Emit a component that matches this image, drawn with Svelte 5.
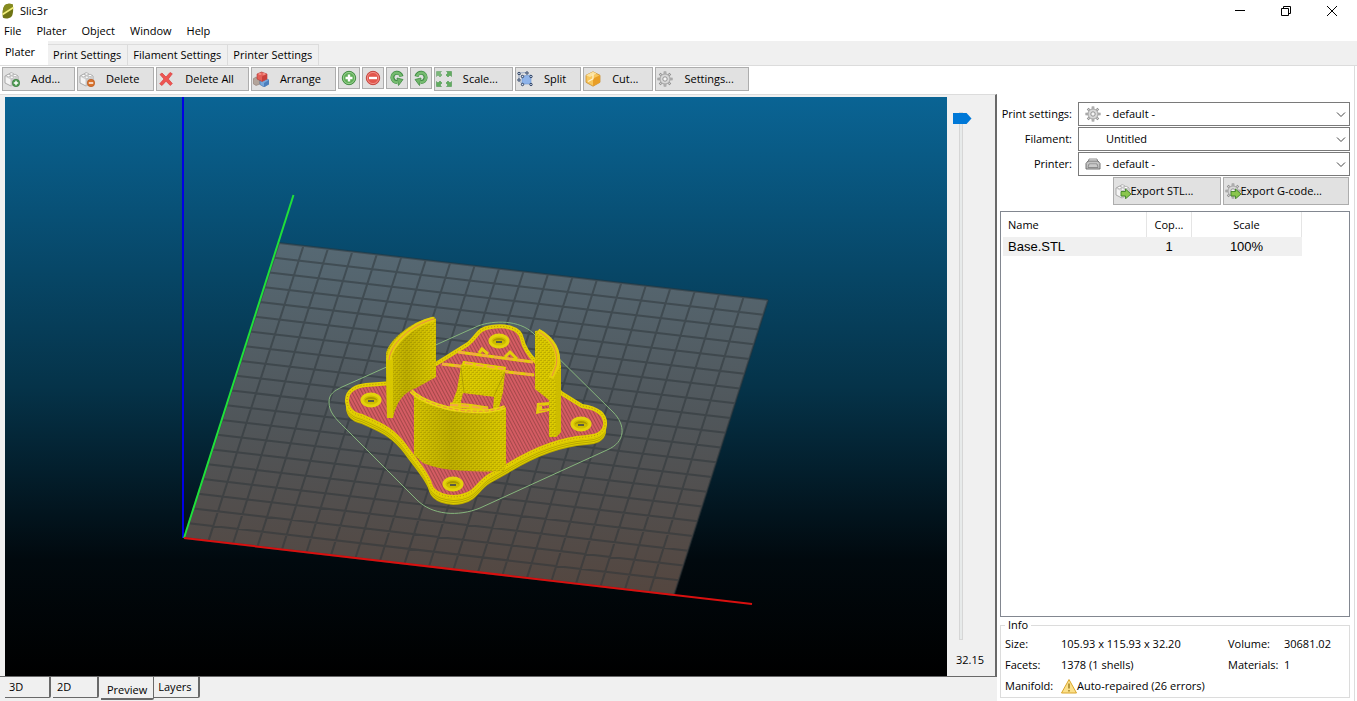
<script lang="ts">
  type Point = [number, number];

  const menus = ["File", "Plater", "Object", "Window", "Help"];
  const tabs = ["Plater", "Print Settings", "Filament Settings", "Printer Settings"];
  const views = ["3D", "2D", "Preview", "Layers"];
  const tools = [
    { icon: "add", label: "Add..." },
    { icon: "delete", label: "Delete" },
    { icon: "cross", label: "Delete All" },
    { icon: "arrange", label: "Arrange" },
    { icon: "more", title: "More copies" },
    { icon: "fewer", title: "Fewer copies" },
    { icon: "ccw", title: "Rotate left" },
    { icon: "cw", title: "Rotate right" },
    { icon: "scale", label: "Scale..." },
    { icon: "split", label: "Split" },
    { icon: "cut", label: "Cut..." },
    { icon: "gear", label: "Settings..." },
  ];
  const presets = [
    { id: "print", label: "Print settings:", icon: "gear", value: "- default -" },
    { id: "filament", label: "Filament:", icon: "", value: "Untitled" },
    { id: "printer", label: "Printer:", icon: "printer", value: "- default -" },
  ];
  const objects = [{ name: "Base.STL", copies: 1, scale: "100%" }];

  let tab = $state("Plater");
  let view = $state("Preview");
  let layer = $state(32.15);

  // print bed: corners on screen, origin first, then clockwise
  const bed: Point[] = [[184, 538], [279, 243], [768, 300], [674, 595]];
  const cells = 20;
  const lerp = (a: Point, b: Point, t: number): Point => [
    a[0] + (b[0] - a[0]) * t,
    a[1] + (b[1] - a[1]) * t,
  ];
  const line = (a: Point, b: Point) => `M${a.join(" ")}L${b.join(" ")}`;
  let grid = "";
  for (let i = 0; i <= cells; i++) {
    const t = i / cells;
    grid += line(lerp(bed[0], bed[3], t), lerp(bed[1], bed[2], t));
    grid += line(lerp(bed[0], bed[1], t), lerp(bed[3], bed[2], t));
  }

  const plate =
    "M347 400C347 390 357 386 366 385L392 383L436 364L468 344C477 337 478 328 491 327C504 325 520 327 522 339C524 348 529 355 536 362L561 393L582 406C596 408 606 413 605 425C604 434 596 436 586 437C560 439 533 450 510 464L489 476C478 483 476 493 462 496C447 499 433 494 430 484C428 474 414 459 405 446C392 428 379 424 362 416C352 414 347 409 347 400Z";
  const holes: Point[] = [[371, 400], [499, 341], [581, 424], [453, 484]];
</script>

{#snippet brick()}
  <path d="M1 5l6-3 7 3v6l-7 4-6-3z" fill="#f4f4f4" stroke="#999" stroke-width=".8" />
  <path d="M7 8l7-3v6l-7 4z" fill="#ccc" />
  <path d="M1 5l6 3v7" fill="none" stroke="#bbb" stroke-width=".7" />
  <g fill="#fff" stroke="#999" stroke-width=".6">
    <ellipse cx="4.5" cy="4.6" rx="1.8" ry="1.2" /><ellipse cx="7.5" cy="3" rx="1.8" ry="1.2" />
    <ellipse cx="7.8" cy="6.2" rx="1.8" ry="1.2" /><ellipse cx="11" cy="4.5" rx="1.8" ry="1.2" />
  </g>
{/snippet}

{#snippet cog()}
  <g stroke="#8b8b8b" stroke-width="2.6">
    <path d="M8 .5v15M.5 8h15M2.700 2.700l10.600 10.600M13.300 2.700L2.700 13.300" />
  </g>
  <g stroke="#d6d6d6" stroke-width="1.2">
    <path d="M8 1.200v13.600M1.200 8h13.600M3.200 3.200l9.600 9.600M12.800 3.200L3.200 12.800" />
  </g>
  <circle cx="8" cy="8" r="5" fill="#d9d9d9" stroke="#999" stroke-width=".8" />
  <circle cx="8" cy="8" r="2.2" fill="#f6f6f6" stroke="#8a8a8a" stroke-width=".9" />
{/snippet}

{#snippet arrow()}
  <path d="M6 8.500h4.500V6l5.500 5-5.500 4.800V13H6z" fill="#8ac64d" stroke="#3f8526" stroke-width=".9" />
{/snippet}

{#snippet icon(name: string)}
  <svg class="icon" viewBox="0 0 16 16" aria-hidden="true">
    {#if name === "add" || name === "delete"}
      {@render brick()}
      <circle cx="12" cy="12" r="3.7" fill={name === "add" ? "#4e9c52" : "#d9722c"} stroke={name === "add" ? "#2f7436" : "#b3521a"} stroke-width=".6" />
      <path d={name === "add" ? "M9.8 12h4.4M12 9.8v4.4" : "M9.8 12h4.4"} stroke="#fff" stroke-width="1.4" />
    {:else if name === "cross"}
      <path d="M2 3.5L4 2l4 4 4-4.5 2.3 1.3L10.3 8l4 4.5-2 2L8 10.2 4 14.5l-2.3-1.7L6 8z" fill="#ee5552" stroke="#d93c3c" stroke-width=".7" />
    {:else if name === "arrange"}
      <path d="M0 8l3-2 4 2v5l-4 1.5-3-2z" fill="#b3a49a" stroke="#8b7a72" stroke-width=".6" />
      <path d="M7 9l4-2 5 2v4l-5 3-4-2.5z" fill="#78a8dc" stroke="#3f72ad" stroke-width=".6" />
      <path d="M11 12l5-3v4l-5 3z" fill="#4c7fbd" />
      <path d="M4 3l4.5-2L14 3v5l-5 2.5L4 8z" fill="#e36058" stroke="#b23832" stroke-width=".6" />
      <path d="M9 5.5L14 3v5l-5 2.5z" fill="#c8403c" />
      <ellipse cx="7" cy="3" rx="1.6" ry="1" fill="#f48c84" /><ellipse cx="11" cy="3" rx="1.6" ry="1" fill="#f48c84" />
    {:else if name === "more" || name === "fewer"}
      {@const green = name === "more"}
      <circle cx="8" cy="8" r="6.7" fill={green ? "#5fae57" : "#e2564d"} stroke={green ? "#438d44" : "#c44740"} />
      <circle cx="8" cy="8" r="5.6" fill="none" stroke={green ? "#a8d8a0" : "#f4a09a"} stroke-width=".8" />
      <path d={green ? "M4.5 8h7M8 4.5v7" : "M4 8h8"} stroke="#fff" stroke-width="2.4" />
    {:else if name === "ccw" || name === "cw"}
      <g transform={name === "cw" ? "translate(16 0) scale(-1 1)" : undefined} fill="none">
        <path d="M12.5 6.500A4.600 4.600 0 1 0 8 12" stroke="#3d8a42" stroke-width="4" />
        <path d="M8 8l6 1.500L9.500 15.500z" fill="#6eb568" stroke="#3d8a42" stroke-width=".8" />
        <path d="M12.100 6.200A4.600 4.600 0 1 0 8.800 12" stroke="#76bb70" stroke-width="2.600" />
      </g>
    {:else if name === "scale"}
      <g fill="#62ad5f" stroke="#3f8c44" stroke-width=".5">
        <path d="M.5.5h5L4 2l2 2-2 2-2-2L.5 5.5z" opacity=".8" />
        <path d="M15.5.5v5L14 4l-2 2-2-2 2-2L10.500.5z" />
        <path d="M.5 15.5v-5L2 12l2-2 2 2-2 2 1.500 1.500z" />
        <path d="M15.500 15.500h-5L12 14l-2-2 2-2 2 2 1.500-1.500z" />
      </g>
    {:else if name === "split"}
      <path d="M5 5l9-1v9H5z" fill="#8fb4ea" stroke="#6d94cf" stroke-width=".6" />
      <path d="M2 2l8-.5M2 2v7l3 4M2 2l3 3" stroke="#7c93b8" stroke-width=".7" fill="none" />
      <g fill="#dbe6f6" stroke="#2c3f60" stroke-width="1">
        <circle cx="2" cy="2.5" r="1.2" /><circle cx="10" cy="2" r="1.2" /><circle cx="2" cy="9" r="1.2" />
        <circle cx="5.5" cy="5.5" r="1.2" /><circle cx="14" cy="5.5" r="1.2" />
        <circle cx="5.5" cy="13.5" r="1.2" /><circle cx="14" cy="13.5" r="1.2" />
      </g>
    {:else if name === "cut"}
      <path d="M8 .8l7 3.5v7L8 15.2 1 11.300v-7z" fill="#f7c65c" stroke="#c98d2c" stroke-width=".8" />
      <path d="M8 7.500l7-3.200v7l-7 3.900z" fill="#e89e26" />
      <path d="M1 4.300l7-3.500 3.500 1.700L5 6z" fill="#fbe3a0" />
      <path d="M8 3.500v4.300L3 10.500" stroke="#fff3cf" stroke-width="1.2" fill="none" />
    {:else if name === "gear"}
      {@render cog()}
    {:else if name === "printer"}
      <path d="M4 3h8l1.500 5h-11z" fill="#f2f2f2" stroke="#777" stroke-width=".8" />
      <path d="M1 7.500L3 5h10l2 2.500V13H1z" fill="#c4c4c4" stroke="#666" stroke-width=".9" />
      <path d="M4 8h8l1 3.500H3z" fill="#eee" stroke="#777" stroke-width=".8" />
      <path d="M4 10h8" stroke="#888" stroke-width=".7" />
    {:else if name === "export-stl"}
      {@render brick()}
      {@render arrow()}
    {:else if name === "export-gcode"}
      {@render cog()}
      {@render arrow()}
    {:else if name === "warning"}
      <path d="M8 1.500L15.500 15H.5z" fill="#fbe08a" stroke="#d9a62c" stroke-linejoin="round" />
      <path d="M8 5.500v5M8 12v1.600" stroke="#9a7a1c" stroke-width="1.400" />
    {/if}
  </svg>
{/snippet}

<div class="app">
  <header class="titlebar">
    <svg class="logo" viewBox="0 0 12 16" aria-hidden="true">
      <path d="M3 2C5 .5 9 .3 10.500 1.200 11.500 4 11.500 11 9.500 13.500 7.500 15.800 3 16 1 14.800 0 11 .5 5 3 2z" fill="#6f7414" />
      <path d="M3 2C5 .5 9 .3 10.500 1.200L11 4 1 11C.5 8 1 4.500 3 2z" fill="#858b20" />
      <path d="M.5 11.500L11.500 4.500" stroke="#f4f07c" stroke-width="1.500" />
    </svg>
    <h1>Slic3r</h1>
    <div class="window-buttons">
      <button aria-label="Minimize"><svg viewBox="0 0 12 12"><path d="M1 5.500h10" /></svg></button>
      <button aria-label="Restore"><svg viewBox="0 0 12 12"><path d="M1.500 3.500h7v7h-7zM3.500 3.500v-2h7v7h-2" /></svg></button>
      <button aria-label="Close"><svg viewBox="0 0 12 12"><path d="M1 1l10 10M11 1L1 11" /></svg></button>
    </div>
  </header>

  <nav class="menubar">
    {#each menus as m}
      <button>{m}</button>
    {/each}
  </nav>

  <div class="tabs" role="tablist">
    {#each tabs as t}
      <button role="tab" aria-selected={tab === t} class:active={tab === t} onclick={() => (tab = t)}>{t}</button>
    {/each}
  </div>

  <div class="page">
    <div class="toolbar">
      {#each tools as t}
        <button class:small={!t.label} aria-label={t.label ?? t.title}>
          {@render icon(t.icon)}
          {#if t.label}<span>{t.label}</span>{/if}
        </button>
      {/each}
    </div>

    <div class="columns">
      <main>
        <div class="preview">
          <svg class="scene" viewBox="5 97 942 579" preserveAspectRatio="xMidYMid slice">
            <defs>
              <linearGradient id="sky" x1="0" y1="0" x2="0" y2="1">
                <stop offset="0" stop-color="#0a6494" />
                <stop offset=".5" stop-color="#053349" />
                <stop offset=".8" stop-color="#01090e" />
                <stop offset="1" stop-color="#000" />
              </linearGradient>
              <linearGradient id="bed" x1="0" y1="0" x2="0" y2="1">
                <stop offset="0" stop-color="#566974" />
                <stop offset=".5" stop-color="#50565a" />
                <stop offset="1" stop-color="#54463f" />
              </linearGradient>
              <pattern id="infill" width="3" height="3" patternUnits="userSpaceOnUse" patternTransform="rotate(-28)">
                <rect width="3" height="3" fill="#d45c63" />
                <rect width="1" height="3" fill="#a5484a" />
              </pattern>
              <pattern id="layers" width="4" height="4" patternUnits="userSpaceOnUse">
                <rect width="4" height="4" fill="#dccb00" />
                <path d="M0 .5h2M2 2.500h2" stroke="#bcab00" />
                <path d="M3.500 0v2M1.500 2v2" stroke="#cdbc00" />
              </pattern>
              <linearGradient id="shade" x1="0" x2="1">
                <stop offset="0" stop-color="#5c5200" stop-opacity=".05" />
                <stop offset=".4" stop-color="#5c5200" stop-opacity=".22" />
                <stop offset="1" stop-color="#5c5200" stop-opacity="0" />
              </linearGradient>
            </defs>

            <rect x="-995" y="97" width="2942" height="579" fill="url(#sky)" />
            <polygon points={bed.map((p) => p.join(",")).join(" ")} fill="url(#bed)" />
            <path d={grid} stroke="#2c3337" stroke-opacity=".5" stroke-width="2" fill="none" />
            <path d="M183 97V538" stroke="#0000e6" stroke-width="2" />
            <path d="M184 538L293.500 195" stroke="#1fe03a" stroke-width="2" />
            <path d="M184 538L752 604" stroke="#d9100f" stroke-width="2" />

            <!-- skirt -->
            <path
              d="M329 402C329 394 334 391 342 387L478 326C494 320 519 320 533 333L613 412C626 425 626 442 607 450L480 508C458 517 432 515 417 500L345 428C335 418 329 412 329 402Z"
              fill="none"
              stroke="#86b57c"
            />

            <!-- base plate, stacked from the bed up -->
            {#each [7, 6, 5, 4, 3, 2, 1] as dy}
              <path d={plate} transform="translate(0 {dy})" fill="#d8c700" stroke={dy % 2 ? "#b9a800" : "#dece00"} stroke-width="2" />
            {/each}
            <path d={plate} fill="url(#infill)" stroke="#e2d000" stroke-width="4" />
            <path d={plate} fill="none" stroke="#b98a16" stroke-width="1" stroke-dasharray="1 2" />
            {#each holes as [x, y]}
              <ellipse cx={x} cy={y} rx="9" ry="6" fill="#d0bf00" stroke="#e3d20c" stroke-width="3" />
              <ellipse cx={x} cy={y} rx="6" ry="3" fill="#a89800" />
              <ellipse cx={x} cy={y + 1} rx="6" ry="2" fill="#cdbc00" />
              <path d="M{x - 3} {y + 1}h6" stroke="#5a5a45" stroke-width="2" />
            {/each}

            <!-- rib across the back -->
            <path d="M458 352L533 362M442 364L534 375" stroke="#e3ce0a" stroke-width="3" />
            <path d="M458 352L533 362M442 364L534 375" stroke="#f5a648" stroke-width="2" stroke-dasharray="7 5" />
            <path d="M479 353l3-4 6 5M505 357l5-5 7 7" stroke="#e3ce0a" stroke-width="3" fill="none" />

            <!-- centre box -->
            <path d="M463 361L506 367L505 372L503 392L499 408H493L494 397L463 393L460 406H451L457 390L461 366Z" fill="url(#layers)" />
            <path d="M463 361L506 367L505 371L463 365Z" fill="#e4d200" />
            <path d="M465 363L504 369" stroke="#f5a648" stroke-width="2" stroke-dasharray="8 3" />
            <path d="M461 368L464 392M505 372L494 396" stroke="#b0a000" fill="none" />
            <path d="M466 394L493 397L491 404L462 401Z" fill="url(#infill)" />
            <path d="M450 405C466 405 474 407 488 409" stroke="#e3ce0a" stroke-width="5" fill="none" />
            <path d="M450 405C466 405 474 407 488 409" stroke="#f5a648" stroke-width="2" stroke-dasharray="8 3" fill="none" />

            <!-- left wall -->
            <path d="M386 354C388 340 413 320 434 317L436 319V377L416 388C404 392 396 402 393 418H387Z" fill="url(#layers)" />
            <path d="M386 354C388 340 413 320 434 317L436 319V377L416 388C404 392 396 402 393 418H387Z" fill="url(#shade)" />
            <path d="M386 358L393 358V418H387Z" fill="#d8c700" />
            <path d="M389 360C390 344 412 324 434 319" stroke="#e3ce0a" stroke-width="5" fill="none" />
            <path d="M389 360C390 344 412 324 434 319" stroke="#ed8a45" fill="none" />

            <!-- right wall -->
            <path d="M537 403L550 402V405L542 406V409L550 408L549 411L536 414Z" fill="#e3ce0a" />
            <path d="M539 406L543 405M539 411L547 410" stroke="#f08a40" />
            <path d="M535 331L541 330C556 341 560 350 561 366V432L556 437H549V400L535 389Z" fill="url(#layers)" />
            <path d="M549 380L561 370V432L556 437H549Z" fill="#cdbc00" />
            <path d="M549 380H556V437H549Z" fill="url(#layers)" />
            <path d="M538 331C553 339 560 352 557 366L551 378" stroke="#e3ce0a" stroke-width="5" fill="none" />
            <path d="M539 332C553 340 559 353 556 366L552 376" stroke="#ed8a45" fill="none" />

            <!-- front wall -->
            <path d="M412 391L418 394C422 403 450 412 470 413C485 414 500 411 506 407V466L504 471C480 472 444 472 423 463L414 455V396Z" fill="url(#layers)" />
            <path d="M414 396C422 405 450 412 470 413C485 414 500 411 506 407V466L504 471C480 472 444 472 423 463L414 455Z" fill="url(#shade)" />
            <path d="M411 391C422 402 450 411 472 411C486 412 498 410 505 407" stroke="#e8d510" stroke-width="4" fill="none" />
            <path d="M411 391C422 402 450 411 472 411C486 412 498 410 505 407" stroke="#ee9340" stroke-dasharray="4 2" fill="none" />
          </svg>
          <div class="layer-slider">
            <input type="range" min="0" max="32.15" step="0.05" aria-label="Layer height" bind:value={layer} />
            <output>{layer.toFixed(2)}</output>
          </div>
        </div>
        <div class="views" role="tablist">
          {#each views as v}
            <button role="tab" aria-selected={view === v} class:active={view === v} onclick={() => (view = v)}>{v}</button>
          {/each}
        </div>
      </main>

      <aside>
        <div class="presets">
          {#each presets as p}
            <label for={p.id}>{p.label}</label>
            <div class="select">
              {#if p.icon}{@render icon(p.icon)}{/if}
              <select id={p.id}><option>{p.value}</option></select>
              <svg class="chevron" viewBox="0 0 10 6" aria-hidden="true"><path d="M1 .5l4 4 4-4" /></svg>
            </div>
          {/each}
        </div>
        <div class="exports">
          <button>{@render icon("export-stl")}<span>Export STL...</span></button>
          <button>{@render icon("export-gcode")}<span>Export G-code...</span></button>
        </div>
        <div class="objects">
          <table>
            <thead>
              <tr><th>Name</th><th>Cop...</th><th>Scale</th></tr>
            </thead>
            <tbody>
              {#each objects as o}
                <tr><td>{o.name}</td><td>{o.copies}</td><td>{o.scale}</td></tr>
              {/each}
            </tbody>
          </table>
        </div>
        <fieldset>
          <legend>Info</legend>
          <dl>
            <dt>Size:</dt><dd>105.93 x 115.93 x 32.20</dd>
            <dt>Volume:</dt><dd>30681.02</dd>
            <dt>Facets:</dt><dd>1378 (1 shells)</dd>
            <dt>Materials:</dt><dd>1</dd>
            <dt>Manifold:</dt><dd class="wide">{@render icon("warning")}Auto-repaired (26 errors)</dd>
          </dl>
        </fieldset>
      </aside>
    </div>
  </div>
</div>

<style>
  :global(body) {
    background: #fff;
  }
  .app {
    display: flex;
    flex-direction: column;
    height: 100vh;
    min-height: 500px;
    font: 11px/16px "Open Sans", "Noto Sans", sans-serif;
    color: #000;
  }
  button,
  select {
    font: inherit;
    color: inherit;
    margin: 0;
  }
  button {
    box-sizing: border-box;
    border: 0;
    padding: 0;
    background: none;
    white-space: nowrap;
  }
  .icon {
    flex: none;
    width: 16px;
    height: 16px;
  }

  .titlebar {
    display: flex;
    align-items: center;
    gap: 6px;
    height: 21px;
    padding-left: 2px;
  }
  .logo {
    width: 12px;
    height: 16px;
  }
  h1 {
    margin: 0;
    font-size: 11px;
    font-weight: 400;
  }
  .window-buttons {
    display: flex;
    margin-left: auto;
    margin-right: 2px;
  }
  .window-buttons button {
    display: grid;
    place-items: center;
    width: 46px;
    height: 20px;
  }
  .window-buttons svg {
    width: 12px;
    height: 12px;
    fill: none;
    stroke: #000;
  }
  .menubar {
    display: flex;
    gap: 15px;
    height: 20px;
    padding-left: 4px;
  }

  .tabs {
    display: flex;
    align-items: flex-end;
    height: 25px;
    background: #f0f0f0;
    border-bottom: 1px solid #dcdcdc;
    box-sizing: border-box;
  }
  .tabs button {
    height: 21px;
    padding: 0 6px 0 5px;
    border: 1px solid #dcdcdc;
    border-width: 1px 1px 0 0;
  }
  .tabs button.active {
    height: 24px;
    padding: 0 12px 3px 5px;
    background: #fff;
    border-color: #fff;
  }

  .page {
    flex: 1;
    display: flex;
    flex-direction: column;
    min-height: 0;
    margin-right: 2px;
    border-right: 1px solid #dcdcdc;
  }
  .toolbar {
    display: flex;
    gap: 2px;
    padding: 1px 2px 3px;
  }
  .toolbar button,
  .exports button {
    display: flex;
    align-items: center;
    background: #e1e1e1;
    border: 1px solid #adadad;
  }
  .toolbar button {
    height: 24px;
    gap: 11px;
    padding: 0 14px 0 1px;
  }
  .toolbar button.small {
    height: 22px;
    padding: 0 2px;
  }

  .columns {
    flex: 1;
    display: flex;
    min-height: 0;
  }
  main {
    flex: 1;
    display: flex;
    flex-direction: column;
    min-width: 0;
    background: #f0f0f0;
  }
  .preview {
    flex: 1;
    display: flex;
    min-height: 0;
    padding: 2px 0 0 5px;
    border: solid #696969;
    border-width: 0 2px 1px 0;
    border-top: 1px solid #dcdcdc;
  }
  .scene {
    flex: 1;
    min-width: 0;
    height: 100%;
    background: #000;
  }
  .layer-slider {
    display: flex;
    flex-direction: column;
    gap: 12px;
    width: 48px;
    padding: 15px 0 8px 5px;
    box-sizing: border-box;
  }
  .layer-slider output {
    padding-left: 4px;
  }
  .layer-slider input {
    appearance: none;
    writing-mode: vertical-lr;
    direction: rtl;
    flex: 1;
    width: 17px;
    min-height: 0;
    margin: 0;
    background: none;
  }
  .layer-slider input::-webkit-slider-runnable-track {
    width: 4px;
    box-sizing: border-box;
    background: #e7eaea;
    border: 1px solid #d6d6d6;
  }
  .layer-slider input::-webkit-slider-thumb {
    appearance: none;
    width: 19px;
    height: 11px;
    margin-left: -7px;
    background: #0078d7;
    clip-path: polygon(0 0, 74% 0, 100% 50%, 74% 100%, 0 100%);
  }
  .views {
    display: flex;
    align-items: flex-start;
    height: 24px;
    padding-left: 5px;
  }
  .views button {
    height: 21px;
    min-width: 46px;
    padding: 0 6px 0 4px;
    text-align: left;
    border: solid #696969;
    border-width: 0 2px 1px 0;
    margin-right: 2px;
    border-radius: 0 0 2px 0;
  }
  .views button.active {
    height: 23px;
    margin-right: 0;
    padding: 4px 6px 0;
    border-width: 0 1px 2px 0;
  }

  aside {
    display: flex;
    flex-direction: column;
    flex: none;
    width: 350px;
    padding: 8px 4px 3px 3px;
  }
  .presets {
    display: grid;
    grid-template-columns: 72px 1fr;
    column-gap: 6px;
    row-gap: 1px;
    align-items: center;
  }
  .presets label {
    text-align: right;
    white-space: nowrap;
  }
  .select {
    position: relative;
  }
  .select .icon {
    position: absolute;
    left: 7px;
    top: 4px;
    pointer-events: none;
  }
  select {
    appearance: none;
    display: block;
    width: 100%;
    height: 24px;
    padding: 0 24px 0 27px;
    border: 1px solid #7a7a7a;
    border-radius: 0;
    background: #fff;
  }
  .chevron {
    position: absolute;
    right: 4px;
    top: 10px;
    width: 10px;
    height: 6px;
    fill: none;
    stroke: #444;
    pointer-events: none;
  }
  .exports {
    display: flex;
    justify-content: flex-end;
    gap: 2px;
    padding: 1px 1px 6px 0;
  }
  .exports button {
    height: 28px;
    padding: 0 26px 0 1px;
  }
  .objects {
    flex: 1;
    min-height: 0;
    border: 1px solid #828790;
    padding: 0 2px;
  }
  table {
    table-layout: fixed;
    width: 299px;
    border-collapse: collapse;
  }
  th,
  td {
    padding: 0 5px;
    font-weight: 400;
    text-align: center;
  }
  th {
    width: 99px;
    height: 25px;
    border-right: 1px solid #e5e5e5;
  }
  th:first-child,
  td:first-child {
    text-align: left;
  }
  th:first-child {
    width: 133px;
  }
  th:nth-child(2) {
    width: 34px;
  }
  td {
    height: 19px;
    font: 13px/18px "Liberation Sans", Arial, sans-serif;
  }
  tbody tr {
    background: #f0f0f0;
  }
  fieldset {
    margin: 0;
    padding: 0 4px 1px;
    border: 1px solid #dcdcdc;
  }
  legend {
    padding: 0 3px;
  }
  dl {
    display: grid;
    grid-template-columns: 56px 167px 56px 1fr;
    grid-auto-rows: 21px;
    align-items: center;
    margin: 0;
    white-space: nowrap;
  }
  dd {
    display: flex;
    align-items: center;
    margin: 0;
  }
  dd.wide {
    grid-column: span 3;
  }
</style>
